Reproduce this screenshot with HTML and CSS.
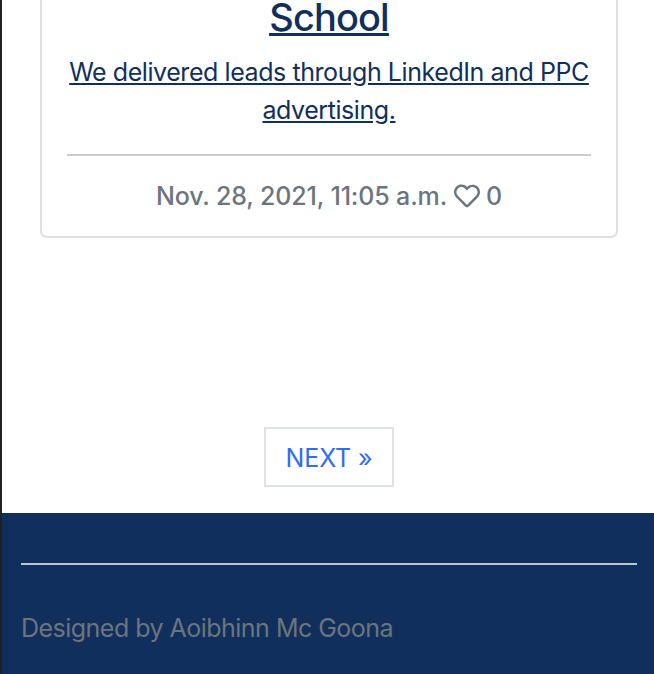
FILE: index.html
```
<!DOCTYPE html>
<html lang="en">
<head>
<meta charset="utf-8">
<title>Posts</title>
<link rel="stylesheet" href="styles.css">
</head>
<body>
<main class="content">
  <article class="card">
    <a class="card-link" href="#">
      <h2 class="card-title">School</h2>
      <p class="card-text">We delivered leads through LinkedIn and PPC<br>advertising.</p>
    </a>
    <hr class="card-rule">
    <p class="card-meta"><span>Nov. 28, 2021, 11:05 a.m.</span><svg class="heart" viewBox="0 0 512 512" aria-hidden="true"><path d="M458.4 64.3C400.6 15.7 311.3 23 256 79.300 200.700 23 111.400 15.600 53.600 64.300-21.600 127.600-10.600 230.800 43 285.500l175.400 178.700c10 10.200 23.400 15.900 37.600 15.900 14.300 0 27.600-5.600 37.600-15.800L469 285.600c53.500-54.700 64.700-157.900-10.600-221.300zm-23.600 187.500L259.400 430.500c-2.400 2.400-4.400 2.400-6.800 0L77.200 251.800c-36.500-37.200-43.900-107.600 7.300-150.700 38.900-32.700 98.900-27.800 136.500 10.500l35 35.700 35-35.700c37.800-38.500 97.800-43.200 136.500-10.600 51.100 43.100 43.500 113.900 7.300 150.800z"/></svg><span>0</span></p>
  </article>
  <nav class="pager"><a class="page-link" href="#">NEXT »</a></nav>
</main>
<footer class="footer">
  <hr class="footer-rule">
  <p class="credit">Designed by Aoibhinn Mc Goona</p>
</footer>
</body>
</html>
```
FILE: styles.css
```
* { box-sizing: border-box; }
body {
  margin: 0;
  height: 674px;
  overflow: hidden;
  display: flex;
  flex-direction: column;
  border-left: 2px solid #202124;
  background: #fff;
  font-family: Inter, "Liberation Sans", sans-serif;
  font-size: 25px;
  line-height: 38px;
}
h2, p, hr { margin: 0; }
.content {
  height: 513px;
  padding: 0 36px 0 38px;
  display: flex;
  flex-direction: column;
  align-items: center;
}
.card {
  width: 578px;
  height: 238px;
  flex: none;
  border: 2px solid #dfdfdf;
  border-top: 0;
  border-radius: 0 0 7px 7px;
  padding: 0 25px;
  text-align: center;
}
.card-link { color: #112f5c; }
.card-title {
  padding-top: 1px;
  font-size: 38px;
  font-weight: 550;
  line-height: 32px;
  letter-spacing: -0.9px;
  text-decoration: underline;
  text-decoration-thickness: 3px;
  text-underline-offset: 2px;
}
.card-text {
  margin-top: 20px;
  letter-spacing: -0.43px;
  white-space: nowrap;
  text-decoration-thickness: 2px;
}
.card-rule {
  margin-top: 25px;
  border: 0;
  height: 2px;
  background: #cbcbcb;
}
.card-meta {
  margin-top: 21px;
  display: flex;
  justify-content: center;
  align-items: center;
  gap: 7px;
  color: #6c757d;
  font-weight: 550;
  letter-spacing: -0.15px;
}
.heart { width: 26px; height: 26px; margin-right: -1px; fill: currentColor; }
.pager { margin-top: 189px; }
.page-link {
  display: flex;
  align-items: center;
  justify-content: center;
  width: 130px;
  height: 60px;
  padding-top: 1px;
  border: 2px solid #dee2e6;
  color: #2f6df6;
  letter-spacing: -0.1px;
  text-decoration: none;
}
.footer {
  flex: 1;
  padding: 50px 17px 0 19px;
  background: #112f5c;
}
.footer-rule { border: 0; height: 2px; background: #bcc5d2; }
.credit { margin-top: 44px; color: #6c757d; letter-spacing: -0.52px; }
```
